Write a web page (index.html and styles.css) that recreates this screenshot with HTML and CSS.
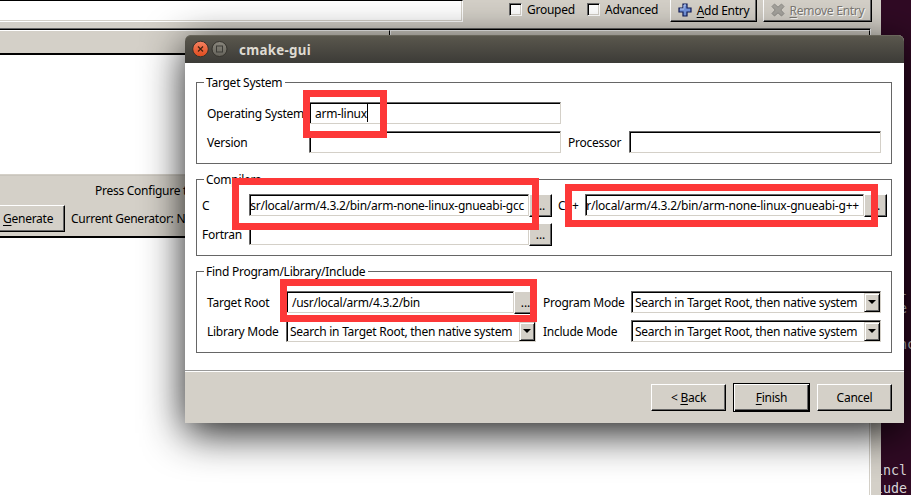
FILE: index.html
```html
<!DOCTYPE html>
<html lang="en">
<head>
<meta charset="utf-8">
<title>cmake-gui</title>
<link rel="stylesheet" href="styles.css">
</head>
<body>
<div class="desktop">
  <main class="main-window">
    <div class="toolbar">
      <div class="search"></div>
      <label class="check grouped"><i class="box"></i><span>Grouped</span></label>
      <label class="check advanced"><i class="box"></i><span>Advanced</span></label>
      <div class="btn tool add">
        <svg width="14" height="14" viewBox="0 0 14 14"><path d="M5 1h4v4h4v4H9v4H5V9H1V5h4z" fill="#7494dc" stroke="#101c58" stroke-width="1.2"/><path d="M6 5.500V2h2M2 6h4" fill="none" stroke="#b9ccf5"/></svg>
        <span><u>A</u>dd Entry</span>
      </div>
      <div class="btn tool remove">
        <svg width="14" height="14" viewBox="0 0 14 14"><path d="M3.500 1 7 4.200 10.500 1 13 3.500 9.800 7 13 10.500 10.500 13 7 9.800 3.500 13 1 10.500 4.200 7 1 3.500z" fill="#a5a39d" stroke="#8e8c87"/></svg>
        <span><u>R</u>emove Entry</span>
      </div>
    </div>
    <div class="table">
      <div class="thead"><div class="th"></div><div class="th"></div></div>
      <div class="tbody"></div>
    </div>
    <div class="controls">
      <div class="hint">Press Configure to update</div>
      <div class="gen-row">
        <div class="btn generate"><span><u>G</u>enerate</span></div>
        <span class="generator">Current Generator: None</span>
      </div>
    </div>
    <div class="output"></div>
  </main>
  <aside class="terminal"><pre>   l
   e

   nc






incl
lude</pre></aside>
</div>

<section class="dialog">
  <header class="titlebar">
    <svg width="36" height="18" viewBox="0 0 36 18">
      <defs><linearGradient id="close" x1="0" y1="0" x2="0" y2="1"><stop offset="0" stop-color="#f58262"/><stop offset="1" stop-color="#df4a1c"/></linearGradient>
      <linearGradient id="max" x1="0" y1="0" x2="0" y2="1"><stop offset="0" stop-color="#8a877d"/><stop offset="1" stop-color="#65635b"/></linearGradient></defs>
      <circle cx="8.500" cy="9" r="7.800" fill="url(#close)" stroke="#34322c"/>
      <path d="M6 6.500l5 5M11 6.500l-5 5" stroke="#43210f" stroke-width="1.200"/>
      <circle cx="27.500" cy="9" r="7.500" fill="url(#max)" stroke="#34322c"/>
      <rect x="24.500" y="6" width="6" height="6" fill="none" stroke="#3d3c37"/>
    </svg>
    <h1>cmake-gui</h1>
  </header>
  <div class="content">
    <div class="group system">
      <h2>Target System</h2>
      <div class="row">
        <span class="lbl">Operating System</span>
        <div class="field os"><span class="caret">arm-linux</span></div>
      </div>
      <div class="row">
        <span class="lbl">Version</span>
        <div class="field"></div>
        <span class="lbl processor">Processor</span>
        <div class="field"></div>
      </div>
    </div>
    <div class="group compilers">
      <h2>Compilers</h2>
      <div class="row">
        <span class="lbl">C</span>
        <div class="field tail"><span>/usr/local/arm/4.3.2/bin/arm-none-linux-gnueabi-gcc</span></div>
        <div class="browse">...</div>
        <span class="lbl cpp">C++</span>
        <div class="field tail tail-cpp"><span>/usr/local/arm/4.3.2/bin/arm-none-linux-gnueabi-g++</span></div>
        <div class="browse">...</div>
      </div>
      <div class="row">
        <span class="lbl">Fortran</span>
        <div class="field"></div>
        <div class="browse">...</div>
      </div>
    </div>
    <div class="group find">
      <h2>Find Program/Library/Include</h2>
      <div class="row">
        <span class="lbl">Target Root</span>
        <div class="path"><div class="field"><span>/usr/local/arm/4.3.2/bin</span></div><div class="browse">...</div></div>
        <span class="lbl mode">Program Mode</span>
        <div class="field select"><span>Search in Target Root, then native system</span><i class="drop"></i></div>
      </div>
      <div class="row">
        <span class="lbl">Library Mode</span>
        <div class="field select"><span>Search in Target Root, then native system</span><i class="drop"></i></div>
        <span class="lbl mode">Include Mode</span>
        <div class="field select"><span>Search in Target Root, then native system</span><i class="drop"></i></div>
      </div>
    </div>
  </div>
  <footer class="actions">
    <div class="btn">&lt; <u>B</u>ack</div>
    <div class="btn default"><u>F</u>inish</div>
    <div class="btn">Cancel</div>
  </footer>
</section>

<div class="mark mark-os"></div>
<div class="mark mark-c"></div>
<div class="mark mark-cpp"></div>
<div class="mark mark-root"></div>
</body>
</html>
```
FILE: styles.css
```css
* { box-sizing: border-box; }
body {
  margin: 0;
  width: 911px;
  height: 495px;
  overflow: hidden;
  position: relative;
  font: 12px/16px "Noto Sans", "Open Sans", sans-serif;
  letter-spacing: -0.26px;
  color: #000;
}
span, h2 { white-space: nowrap; }
u { text-decoration: underline; text-underline-offset: 2px; text-decoration-thickness: 1px; }

.desktop { display: flex; height: 495px; overflow: hidden; }
.main-window { width: 881px; flex: none; background: #d4d0c8; display: flex; flex-direction: column; }

.toolbar { height: 28px; display: flex; align-items: flex-start; }
.search { width: 463px; height: 22px; background: #fff; border-top: 1px solid #000; border-right: 1px solid #fff; border-bottom: 1px solid #fff; box-shadow: inset -1px -1px #d4d0c8; }
.check { display: flex; gap: 5px; align-items: center; height: 19px; }
.grouped { margin-left: 46px; width: 78px; }
.advanced { width: 83px; }
.box { width: 13px; height: 13px; background: #fff; border: 1px solid #fff; border-top-color: #666; border-left-color: #666; box-shadow: inset 1px 1px #000, inset -1px -1px #d4d0c8; }

.btn {
  background: #d4d0c8;
  border: 1px solid #000;
  border-top-color: #fff;
  border-left-color: #fff;
  box-shadow: inset -1px -1px #666;
  display: flex;
  align-items: center;
  justify-content: center;
  white-space: pre;
}
.tool { height: 27px; margin-top: -5px; gap: 5px; padding-top: 4px; }
.tool svg { margin-bottom: 2px; }
.add { width: 87px; }
.remove { width: 109px; margin-left: 6px; color: #7d7a74; text-shadow: 1px 1px #fff; }

.table { width: 871px; height: 147px; background: #fff; border-top: 1px solid #666; border-right: 1px solid #fff; border-bottom: 1px solid #d4d0c8; }
.thead { display: flex; height: 26px; border-top: 1px solid #000; }
.th { width: 390px; background: #d4d0c8; border: 1px solid #000; border-top-color: #fff; border-left-color: #fff; border-bottom-width: 2px; }
.th:first-child { border-left: 0; }
.th:last-child { flex: 1; }

.controls { height: 63px; padding-top: 7px; border-bottom: 2px solid #000; border-top: 1px solid #c9c5bd; }
.hint { margin-left: 95px; height: 22px; white-space: nowrap; }
.gen-row { display: flex; align-items: center; gap: 6px; }
.generate { width: 65px; height: 27px; border-left: 0; justify-content: flex-start; padding-left: 3px; }
.output { flex: 1; width: 871px; background: #fff; border-right: 1px solid #fff; box-shadow: inset -1px 0 #d4d0c8; }

.terminal { flex: 1; overflow: hidden; background: #300a24; color: #d8d5d7; padding-top: 282px; }
.terminal pre { margin: 0 0 0 -6px; font: 13.3px/18px "DejaVu Sans Mono", monospace; letter-spacing: 0; }

.dialog {
  position: absolute;
  left: 185px;
  top: 35px;
  width: 719px;
  height: 388px;
  background: #fff;
  border-radius: 6px 6px 0 0;
  box-shadow: 0 10px 42px rgba(0, 0, 0, .9);
  display: flex;
  flex-direction: column;
}
.titlebar { height: 28px; flex: none; border-radius: 6px 6px 0 0; background: linear-gradient(#5b584e, #3c3b37); box-shadow: inset 0 1px #69665b; display: flex; align-items: center; padding-left: 7px; gap: 11px; }
.titlebar h1 { margin: 2px 0 0; font: bold 13.3px/20px "Noto Sans", sans-serif; letter-spacing: 0.3px; color: #dfdbd2; }

.content { flex: 1; padding: 19px 12px 0 11px; }
.group { border: 1px solid #666; padding: 0 10px; }
.group h2 { margin: -8px 0 0 -3px; padding: 0 3px 0 2px; width: max-content; height: 16px; background: #fff; font: inherit; }
.system { height: 82px; }
.compilers { height: 77px; margin-top: 15px; padding: 0 4px 0 5px; }
.group.compilers h2 { margin: -8px 0 6px 2px; }
.find { height: 82px; margin-top: 15px; }
.row { display: grid; grid-template-rows: 22px; height: 22px; margin-bottom: 7px; align-items: center; }
.system .row { grid-template-columns: 102px 252px 68px 252px; }
.group.system h2, .group.find h2 { margin-bottom: 11px; }
.lbl { padding-top: 2px; }
.processor { padding-left: 7px; }
.compilers .row { grid-template-columns: 47px 280px 23px 33px 279px 23px; }
.cpp { padding-left: 6px; }
.find .row { grid-template-columns: 79px 250px 95px 250px; }
.mode { padding-left: 7px; }
.path { display: grid; grid-template-columns: 228px 23px; height: 22px; }

.field {
  height: 22px;
  min-width: 0;
  background: #fff;
  border: 1px solid #d4d0c8;
  border-top-color: #666;
  border-left-color: #666;
  box-shadow: inset 1px 1px #000;
  display: flex;
  align-items: center;
  padding: 0 5px;
  overflow: hidden;
}
.field span { padding-top: 2px; }
.tail { justify-content: flex-end; padding-right: 4px; }
.tail-cpp { letter-spacing: -0.21px; }
.caret { border-right: 1px solid #000; }
.browse { height: 23px; align-self: start; background: #d4d0c8; border: 1px solid #000; border-top-color: #fff; border-left-color: #fff; box-shadow: inset -1px -1px #666; text-align: center; line-height: 21px; letter-spacing: 0; }
.select { padding: 0 0 0 3px; justify-content: space-between; }
.drop { width: 16px; height: 19px; flex: none; background: #d4d0c8; border: 1px solid #000; border-top-color: #d4d0c8; border-left-color: #d4d0c8; box-shadow: inset 1px 1px #fff, inset -1px -1px #666; display: grid; place-items: center; }
.drop::before { content: ""; border: 4px solid transparent; border-top-color: #000; border-bottom: 0; }

.actions { height: 53px; flex: none; background: #d4d0c8; border-top: 1px solid #999; box-shadow: inset 0 1px #fff; display: flex; justify-content: flex-end; align-items: center; gap: 7px; padding-right: 12px; }
.actions .btn { width: 75px; height: 27px; padding-top: 2px; }
.actions .default { width: 77px; height: 29px; border-color: #000; box-shadow: inset 1px 1px #fff, inset -1px -1px #000, inset -2px -2px #666; }

.mark { position: absolute; border: 7px solid #fd3838; }
.mark-os { left: 303px; top: 90px; width: 84px; height: 48px; }
.mark-c { left: 232px; top: 178px; width: 307px; height: 52px; }
.mark-cpp { left: 565px; top: 184px; width: 313px; height: 43px; }
.mark-root { left: 280px; top: 279px; width: 257px; height: 43px; }
```
